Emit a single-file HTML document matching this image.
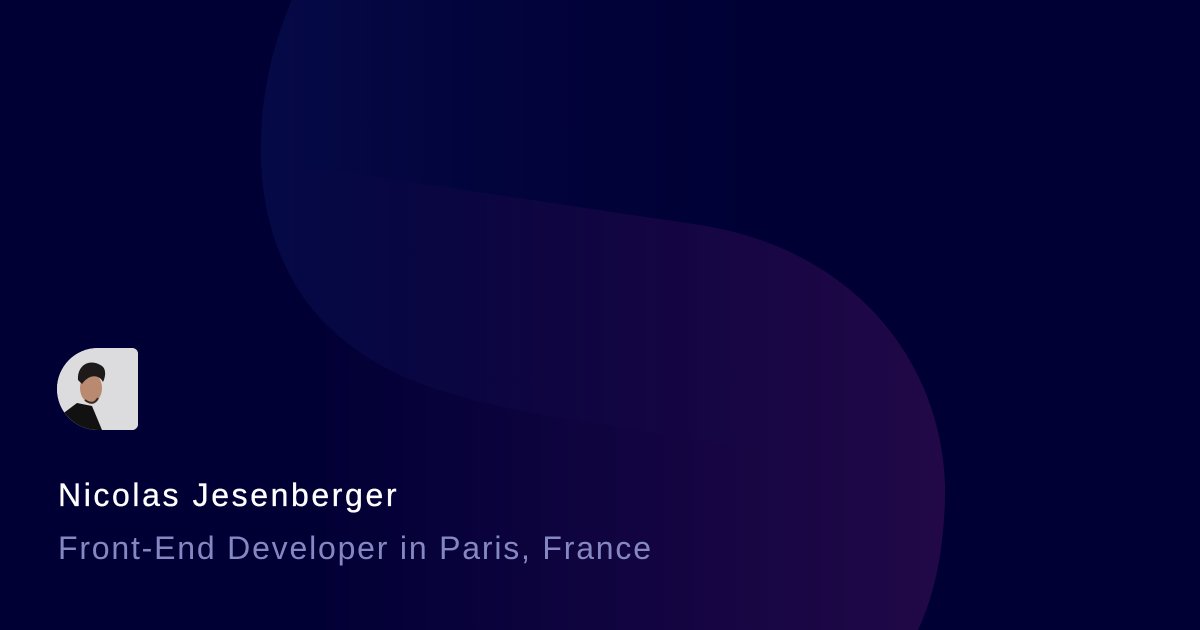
<!DOCTYPE html>
<html><head><style>
html,body{margin:0;padding:0}
body{width:1200px;height:630px;background:#000034;position:relative;overflow:hidden;font-family:"Liberation Sans",sans-serif}
svg{position:absolute;left:0;top:0}
.av{position:absolute;left:57px;top:348px;width:81px;height:82px;border-radius:41px 6px 6px 41px;background:#dcdde0;overflow:hidden}
.t1{position:absolute;left:58px;top:477px;font-size:32px;color:#fff;letter-spacing:2.6px;white-space:nowrap;-webkit-text-stroke:0.3px #fff}
.t2{position:absolute;left:58px;top:530px;font-size:32px;color:#8587c2;letter-spacing:1.8px;white-space:nowrap}
</style></head><body>
<svg width="1200" height="630" viewBox="0 0 1200 630">
<defs>
<linearGradient id="ga" x1="250" y1="0" x2="900" y2="0" gradientUnits="userSpaceOnUse">
<stop offset="0" stop-color="#0a1258" stop-opacity="0.55"/>
<stop offset="1" stop-color="#000034" stop-opacity="0"/>
</linearGradient>
<linearGradient id="gb" x1="300" y1="0" x2="940" y2="0" gradientUnits="userSpaceOnUse">
<stop offset="0" stop-color="#2a0a55" stop-opacity="0"/>
<stop offset="1" stop-color="#2a0a4c" stop-opacity="0.8"/>
</linearGradient>
</defs>
<path d="M292,0 C252,90 240,230 320,318 C385,388 480,405 600,424 L1200,520 L1200,0 Z" fill="url(#ga)"/>
<path d="M330,170 L700,225 C860,250 948,370 945,500 C943,560 932,600 918,630 L300,630 L300,170 Z" fill="url(#gb)"/>
</svg>
<div class="av">
<svg width="81" height="82" viewBox="0 0 81 82">
<rect width="81" height="82" fill="#dcdcde"/>
<path d="M0,70 L20,55 L35,58 L45,82 L0,82 Z" fill="#111"/>
<ellipse cx="34" cy="40" rx="11" ry="15" fill="#b98a70"/>
<path d="M21,32 C20,16 34,10 45,18 C50,22 48,30 46,34 C42,26 32,26 25,36 Z" fill="#1e1a1a"/>
<path d="M28,52 C33,56 38,56 41,50" stroke="#3a2a22" stroke-width="2" fill="none"/>
</svg>
</div>
<div class="t1">Nicolas Jesenberger</div>
<div class="t2">Front-End Developer in Paris, France</div>
</body></html>
